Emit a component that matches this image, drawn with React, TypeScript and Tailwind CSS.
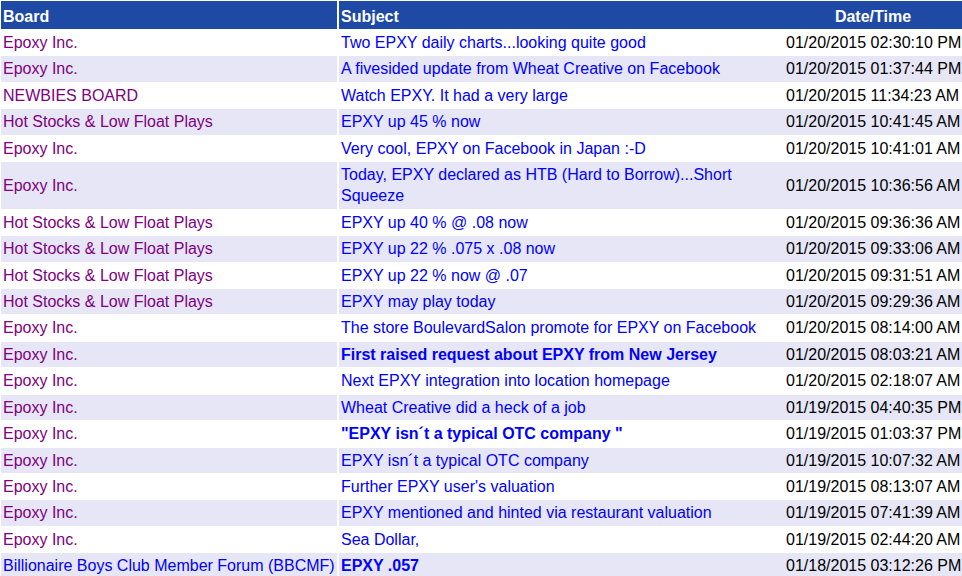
import React from "react";

type Row = { board: string; subject: string; date: string; bold?: boolean; newBoard?: boolean };

const rows: Row[] = [
  { board: "Epoxy Inc.", subject: "Two EPXY daily charts...looking quite good", date: "01/20/2015 02:30:10 PM" },
  { board: "Epoxy Inc.", subject: "A fivesided update from Wheat Creative on Facebook", date: "01/20/2015 01:37:44 PM" },
  { board: "NEWBIES BOARD", subject: "Watch EPXY. It had a very large", date: "01/20/2015 11:34:23 AM" },
  { board: "Hot Stocks & Low Float Plays", subject: "EPXY up 45 % now", date: "01/20/2015 10:41:45 AM" },
  { board: "Epoxy Inc.", subject: "Very cool, EPXY on Facebook in Japan :-D", date: "01/20/2015 10:41:01 AM" },
  { board: "Epoxy Inc.", subject: "Today, EPXY declared as HTB (Hard to Borrow)...Short Squeeze", date: "01/20/2015 10:36:56 AM" },
  { board: "Hot Stocks & Low Float Plays", subject: "EPXY up 40 % @ .08 now", date: "01/20/2015 09:36:36 AM" },
  { board: "Hot Stocks & Low Float Plays", subject: "EPXY up 22 % .075 x .08 now", date: "01/20/2015 09:33:06 AM" },
  { board: "Hot Stocks & Low Float Plays", subject: "EPXY up 22 % now @ .07", date: "01/20/2015 09:31:51 AM" },
  { board: "Hot Stocks & Low Float Plays", subject: "EPXY may play today", date: "01/20/2015 09:29:36 AM" },
  { board: "Epoxy Inc.", subject: "The store BoulevardSalon promote for EPXY on Facebook", date: "01/20/2015 08:14:00 AM" },
  { board: "Epoxy Inc.", subject: "First raised request about EPXY from New Jersey", date: "01/20/2015 08:03:21 AM", bold: true },
  { board: "Epoxy Inc.", subject: "Next EPXY integration into location homepage", date: "01/20/2015 02:18:07 AM" },
  { board: "Epoxy Inc.", subject: "Wheat Creative did a heck of a job", date: "01/19/2015 04:40:35 PM" },
  { board: "Epoxy Inc.", subject: "\"EPXY isn\u00b4t a typical OTC company \"", date: "01/19/2015 01:03:37 PM", bold: true },
  { board: "Epoxy Inc.", subject: "EPXY isn\u00b4t a typical OTC company", date: "01/19/2015 10:07:32 AM" },
  { board: "Epoxy Inc.", subject: "Further EPXY user's valuation", date: "01/19/2015 08:13:07 AM" },
  { board: "Epoxy Inc.", subject: "EPXY mentioned and hinted via restaurant valuation", date: "01/19/2015 07:41:39 AM" },
  { board: "Epoxy Inc.", subject: "Sea Dollar,", date: "01/19/2015 02:44:20 AM" },
  { board: "Billionaire Boys Club Member Forum (BBCMF)", subject: "EPXY .057", date: "01/18/2015 03:12:26 PM", bold: true, newBoard: true },
];

export default function App() {
  return (
    <div className="w-[962px] h-[576px] overflow-hidden bg-white font-['Liberation_Sans',Arial,sans-serif] text-[16px]">
      <table className="w-[962px] border-separate border-spacing-0 table-fixed">
        <thead>
          <tr className="bg-[#1e4aa6] text-white">
            <th className="w-[339px] h-[29px] pl-[2px] pt-[3px] border-l border-t border-r-2 border-white text-left font-bold align-middle">Board</th>
            <th className="h-[29px] pl-[2px] pt-[3px] border-t border-white text-left font-bold align-middle">Subject</th>
            <th className="w-[178px] h-[29px] pt-[3px] border-t border-white text-center font-bold align-middle">Date/Time</th>
          </tr>
        </thead>
        <tbody>
          {rows.map((r, i) => (
            <tr key={i} className={i % 2 === 1 ? "bg-[#e6e6f7]" : "bg-white"}>
              <td className={`pl-[2px] py-[2px] border-l border-t border-r-2 border-white leading-[21.4px] align-middle ${r.newBoard ? "text-[#0000ff]" : "text-[#800080]"}`}>
                {r.board}
              </td>
              <td className={`pl-[2px] pr-[2px] py-[2px] border-t border-white leading-[21.4px] align-middle text-[#0000ff] ${r.bold ? "font-bold" : ""}`}>
                {r.subject}
              </td>
              <td className="pl-[2px] py-[2px] border-t border-white leading-[21.4px] align-middle text-black whitespace-nowrap">{r.date}</td>
            </tr>
          ))}
        </tbody>
      </table>
    </div>
  );
}
